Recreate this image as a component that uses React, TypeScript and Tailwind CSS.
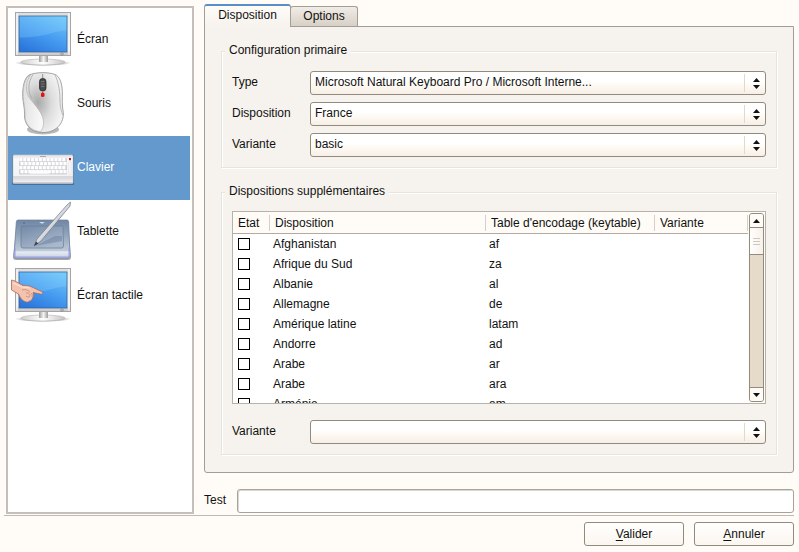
import React from "react";

const comboFace =
  "h-6 w-full appearance-none rounded-[3px] border border-[#928b7d] bg-linear-to-b from-white from-45% via-[#fffcf7] via-50% to-[#f7efe7] pr-8 pb-0.5 pl-1 text-[12px] text-[#111] outline-none";

function Monitor() {
  return (
    <g>
      <ellipse cx="33" cy="55" rx="28" ry="3" fill="url(#shadow)" />
      <ellipse cx="33" cy="54" rx="22" ry="3" fill="url(#metal)" stroke="#b4b4b4" strokeWidth="0.6" />
      <rect x="29" y="48" width="9" height="6" fill="url(#neck)" />
      <rect x="5.5" y="4.5" width="55" height="43" fill="url(#bezel)" stroke="#a5a5a5" />
      <path d="M7 5v42M59 5v42" stroke="#fff" strokeWidth="1" />
      <rect x="9" y="8" width="48" height="36" fill="url(#screen)" stroke="#33639c" strokeWidth="0.8" />
      <path d="M9.500 8.500h47v14c-12 0-21 7-47 7z" fill="#8fd8ff" opacity="0.28" />
      <circle cx="52" cy="46" r="1.300" fill="#ddd" stroke="#777" strokeWidth="0.7" />
    </g>
  );
}

function ScreenIcon() {
  return (
    <svg viewBox="0 0 64 64" className="size-16 shrink-0" aria-hidden="true">
      <defs>
        <linearGradient id="screen" x1="0.8" y1="0" x2="0.2" y2="1">
          <stop offset="0" stopColor="#6cc4f8" />
          <stop offset="0.5" stopColor="#479cf0" />
          <stop offset="1" stopColor="#2a76dc" />
        </linearGradient>
        <linearGradient id="bezel" x1="0" y1="0" x2="0" y2="1">
          <stop offset="0" stopColor="#dedede" />
          <stop offset="0.85" stopColor="#e9e9e9" />
          <stop offset="1" stopColor="#c6c6c6" />
        </linearGradient>
        <linearGradient id="metal" x1="0" y1="0" x2="1" y2="0">
          <stop offset="0" stopColor="#cfcfcf" />
          <stop offset="0.5" stopColor="#ffffff" />
          <stop offset="1" stopColor="#c4c4c4" />
        </linearGradient>
        <linearGradient id="neck" x1="0" y1="0" x2="1" y2="0">
          <stop offset="0" stopColor="#9d9d9d" />
          <stop offset="0.5" stopColor="#f4f4f4" />
          <stop offset="1" stopColor="#9d9d9d" />
        </linearGradient>
        <radialGradient id="shadow">
          <stop offset="0.6" stopColor="#777777" stopOpacity="0.6" />
          <stop offset="1" stopColor="#777777" stopOpacity="0" />
        </radialGradient>
      </defs>
      <Monitor />
    </svg>
  );
}

function MouseIcon() {
  return (
    <svg viewBox="0 0 64 64" className="size-16 shrink-0" aria-hidden="true">
      <defs>
        <radialGradient id="mouse" cx="0.38" cy="0.5" r="0.6">
          <stop offset="0" stopColor="#a9a9a9" />
          <stop offset="0.55" stopColor="#dcdcdc" />
          <stop offset="1" stopColor="#f3f3f3" />
        </radialGradient>
        <linearGradient id="mouseSide" x1="0" y1="0" x2="1" y2="0.3">
          <stop offset="0" stopColor="#dedede" />
          <stop offset="1" stopColor="#f8f8f8" />
        </linearGradient>
      </defs>
      <ellipse cx="33" cy="57.500" rx="16" ry="5" fill="#888" opacity="0.6" />
      <path
        d="M20 2.500c8-2.500 18-2.500 25 0 5 2 7 9 7.300 17 .3 7-.6 13 .7 19 2 9-4 22-20 22-13 0-19-9-18.500-18 .3-7-1.500-11-1.800-18C12.500 16 14 5 20 2.500z"
        fill="url(#mouse)"
        stroke="#8e8e8e"
        strokeWidth="0.8"
      />
      <path
        d="M20.500 3c-5 7-5.500 17-1 23 6 8 14.500 16 14 25 0 4-1 6-3 8.500C20 59 14.500 51 15 42.500c.3-7-1.500-11-1.800-18C13 16 14 6 20.500 3z"
        fill="url(#mouseSide)"
        stroke="#adadad"
        strokeWidth="0.6"
      />
      <path d="M23 2.500c-5 7-5.500 18-1 24" fill="none" stroke="#a4a4a4" strokeWidth="0.8" />
      <path d="M45 3c4 8 5 18 5 26 0 7 2 11 2.500 14" fill="none" stroke="#a8a8a8" strokeWidth="0.8" />
      <path d="M32.700 2v5" stroke="#777" strokeWidth="0.8" />
      <rect x="29.500" y="6.500" width="6.500" height="12.500" rx="3" fill="#4a4a4a" stroke="#222" strokeWidth="0.7" />
      <path d="M31 9.500h3.500M31 12h3.500M31 14.500h3.500" stroke="#888" strokeWidth="0.7" />
      <path d="M32.700 19v2" stroke="#777" strokeWidth="0.8" />
      <rect x="31" y="20.500" width="3.500" height="4.500" rx="1.600" fill="#e6100a" />
    </svg>
  );
}

function KeyboardIcon() {
  const rows = [22, 26, 30, 34];
  return (
    <svg viewBox="0 0 64 64" className="size-16 shrink-0" aria-hidden="true">
      <defs>
        <linearGradient id="kbd" x1="0" y1="0" x2="0" y2="1">
          <stop offset="0" stopColor="#e2e2e6" />
          <stop offset="0.15" stopColor="#f8f8fa" />
          <stop offset="0.72" stopColor="#f4f4f6" />
          <stop offset="0.76" stopColor="#d5d5da" />
          <stop offset="1" stopColor="#f6f6f8" />
        </linearGradient>
      </defs>
      <rect x="2" y="19" width="62.500" height="30" rx="1.500" fill="#37597e" opacity="0.65" />
      <rect x="3" y="19" width="60" height="28.500" rx="1.200" fill="url(#kbd)" stroke="#c7c9d1" strokeWidth="0.6" />
      <path d="M3.500 47h59" stroke="#a9abb5" />
      <rect x="9" y="22" width="48" height="16.500" fill="#d2d2d6" />
      {rows.map((y, r) =>
        Array.from({ length: 12 }, (_, i) => (
          <rect
            key={`${y}-${i}`}
            x={9.3 + (r % 2) * 1.2 + i * 3.9}
            y={y}
            width="3.100"
            height="3.200"
            rx="0.4"
            fill="#fefefe"
          />
        )),
      )}
      <rect x="20" y="34.500" width="19" height="3.200" fill="#fcfcfd" />
      <path d="M30 20.500h6" stroke="#999" strokeWidth="0.8" />
      <rect x="59" y="22" width="2" height="2.200" fill="#c5162a" />
      <rect x="59" y="26" width="2" height="13" rx="0.8" fill="#fff" stroke="#d0d0d5" strokeWidth="0.5" />
    </svg>
  );
}

function TabletIcon() {
  return (
    <svg viewBox="0 0 64 64" className="size-16 shrink-0" aria-hidden="true">
      <defs>
        <linearGradient id="tablet" x1="0" y1="0" x2="0" y2="1">
          <stop offset="0" stopColor="#7086a3" />
          <stop offset="0.35" stopColor="#8ea1b9" />
          <stop offset="0.8" stopColor="#bcc8d6" />
          <stop offset="0.84" stopColor="#e6ebf3" />
          <stop offset="1" stopColor="#c7d0e2" />
        </linearGradient>
        <linearGradient id="pad" x1="0" y1="0" x2="0.6" y2="1">
          <stop offset="0" stopColor="#7389a6" />
          <stop offset="1" stopColor="#a9b9cc" />
        </linearGradient>
        <linearGradient id="pen" x1="0" y1="0" x2="1" y2="1">
          <stop offset="0.3" stopColor="#ffffff" />
          <stop offset="0.8" stopColor="#9aa1ad" />
        </linearGradient>
      </defs>
      <path d="M7 21h51l3 36q0 3-3 3H6q-3 0-3-3z" fill="#777" opacity="0.65" />
      <path d="M8 20h49q1.500 0 1.700 2L60 56q0 2-2 2H6q-2 0-2-2L6.300 22Q6.500 20 8 20z" fill="url(#tablet)" stroke="#6b7f9c" strokeWidth="0.7" />
      <path d="M5 48v8q0 1 1.500 1h51q1.500 0 1.500-1v-8" fill="none" stroke="#8d96f0" strokeWidth="0.9" />
      <path d="M12 26h40q1 0 1 1l.5 19q0 2-2 2H13q-2 0-2-2V28q0-2 1-2z" fill="url(#pad)" stroke="#667c99" strokeWidth="0.7" />
      <path d="M25 46l20-10 7 0v5z" fill="#6b80a0" opacity="0.5" />
      <path d="M29 22h6l-3 1.800z" fill="#d8e0ea" />
      <circle cx="14" cy="23" r="0.7" fill="#3e536f" />
      <path d="M24 46l3-7L57 5l3.500-3-.5 4L31 41z" fill="url(#pen)" stroke="#6f7785" strokeWidth="0.7" />
      <path d="M24 46l2-4.500 2.500 2z" fill="#39424f" />
    </svg>
  );
}

function TouchIcon() {
  return (
    <svg viewBox="0 0 64 64" className="size-16 shrink-0" aria-hidden="true">
      <Monitor />
      <path
        d="M1.500 16L5 17l8 4.500c3-.6 6 .2 9 1.500l9.500 4.500c2 1.200 1.200 2.900-1 2.600l-7.500-1.600c1 2 1 4-.4 5.200-.4 2.200-1.600 3.300-3.100 3.300-1 1.600-3.600 1.400-5.800 0-2.500-1.500-4-4-5.200-7L1.500 26z"
        fill="#f3c3ae"
        stroke="#a5685a"
        strokeWidth="0.8"
      />
      <path d="M12 26c3-1 6 0 8 2M16 29c2-.5 4 .5 4 2.500s-3 2-4 .5M21 29c1.500 1 1.500 3 1 4" fill="none" stroke="#c28a78" strokeWidth="0.8" />
      <path d="M3 19l9 4 8 1" fill="none" stroke="#fde4d8" strokeWidth="1.200" />
    </svg>
  );
}

const devices = [
  { label: "Écran", Icon: ScreenIcon },
  { label: "Souris", Icon: MouseIcon },
  { label: "Clavier", Icon: KeyboardIcon, selected: true },
  { label: "Tablette", Icon: TabletIcon },
  { label: "Écran tactile", Icon: TouchIcon },
];

const layouts = [
  ["Afghanistan", "af"],
  ["Afrique du Sud", "za"],
  ["Albanie", "al"],
  ["Allemagne", "de"],
  ["Amérique latine", "latam"],
  ["Andorre", "ad"],
  ["Arabe", "ar"],
  ["Arabe", "ara"],
  ["Arménie", "am"],
];

function Combo({ id, label, value }: { id: string; label: string; value: string }) {
  return (
    <div className="flex items-center">
      <label htmlFor={id} className="w-[78px] shrink-0 pb-0.5">
        {label}
      </label>
      <div className="relative h-6 min-w-0 flex-1">
        <select id={id} className={comboFace} defaultValue={value}>
          <option value={value}>{value}</option>
        </select>
        <span className="pointer-events-none absolute inset-y-[3px] right-0 flex w-[22px] items-center justify-center border-l border-[#e3d8ca] pt-px pl-0.5">
          <svg width="7" height="11" viewBox="0 0 7 11" aria-hidden="true">
            <path d="M3.500 0L7 4H0zM3.500 11L7 7H0z" fill="#111" />
          </svg>
        </span>
      </div>
    </div>
  );
}

function Group({ title, className, children }: { title: string; className: string; children: React.ReactNode }) {
  return (
    <fieldset
      className={`min-w-0 border border-[#e6e4df] px-2.5 pb-2.5 shadow-[1px_1px_0_#fff,inset_1px_1px_0_#fff] ${className}`}
    >
      <legend className="-ml-[7px] bg-[#f6f3ee] px-1 pb-0.5 leading-[14px]">{title}</legend>
      {children}
    </fieldset>
  );
}

function HeadCell({ children }: { children: string }) {
  return (
    <th scope="col" className="h-[22px] border-b border-[#b5a9a3] p-0 text-left font-normal">
      <div className="flex h-4 items-center border-r border-[#d5cfc9] pl-[5px] whitespace-nowrap">{children}</div>
    </th>
  );
}

export default function App() {
  return (
    <div className="flex h-screen min-h-[552px] flex-col bg-[#fffcf7] px-1 pt-1 pb-1.5 font-['Liberation_Sans',Arial,sans-serif] text-[12px] leading-4 text-[#111]">
      <div className="flex min-h-0 flex-1 gap-2.5 pr-px pb-px">
        <nav className="mt-0.5 ml-0.5 w-[188px] shrink-0 border-2 border-[#c6bebb] bg-white pr-0.5">
          <ul>
            {devices.map(({ label, Icon, selected }) => (
              <li key={label}>
                <button
                  type="button"
                  className={`flex h-16 w-full items-center gap-[3px] pl-0.5 text-left ${selected ? "bg-[#6399cd] text-white" : ""}`}
                >
                  <Icon />
                  <span className="pb-0.5">{label}</span>
                </button>
              </li>
            ))}
          </ul>
        </nav>

        <main className="flex min-w-0 flex-1 flex-col pb-px">
          <div role="tablist" className="flex h-[22px] items-end">
            <button
              type="button"
              role="tab"
              aria-selected="true"
              className="relative z-10 -mb-px h-[23px] w-[87px] rounded-t-[3px] border border-t-2 border-b-0 border-[#a29d96] border-t-[#5590cc] bg-linear-to-b from-[#fffcf7] to-[#f6f3ee] pb-1"
            >
              Disposition
            </button>
            <button
              type="button"
              role="tab"
              aria-selected="false"
              className="-ml-px h-5 w-17 rounded-t-[3px] border border-b-0 border-[#a29d96] bg-linear-to-b from-[#f0ece6] to-[#d8d0c6] pb-0.5"
            >
              Options
            </button>
          </div>

          <section className="flex min-h-0 flex-1 flex-col rounded-b-[3px] border border-[#a29d96] bg-[#f6f3ee] px-4 pt-4 pb-[17px]">
            <Group title="Configuration primaire" className="pt-3">
              <div className="flex flex-col gap-[7px]">
                <Combo id="type" label="Type" value="Microsoft Natural Keyboard Pro / Microsoft Interne..." />
                <Combo id="layout" label="Disposition" value="France" />
                <Combo id="variant" label="Variante" value="basic" />
              </div>
            </Group>

            <Group title="Dispositions supplémentaires" className="mt-4 flex min-h-0 flex-1 flex-col pt-[11px]">
              <div className="flex min-h-0 flex-1 flex-col gap-4">
                <div className="flex min-h-0 flex-1 border border-[#b7b1ab] bg-[#fffcf7]">
                  <div className="h-0 min-h-full min-w-0 flex-1 overflow-hidden bg-white">
                    <table className="w-full table-fixed border-separate border-spacing-0">
                      <colgroup>
                        <col className="w-[37px]" />
                        <col className="w-[216px]" />
                        <col className="w-[169px]" />
                        <col />
                      </colgroup>
                      <thead className="bg-[#fffcf7]">
                        <tr>
                          <HeadCell>Etat</HeadCell>
                          <HeadCell>Disposition</HeadCell>
                          <HeadCell>Table d'encodage (keytable)</HeadCell>
                          <HeadCell>Variante</HeadCell>
                        </tr>
                      </thead>
                      <tbody>
                        {layouts.map(([name, code], i) => (
                          <tr key={i}>
                            <td className="h-5 p-0 pl-[5px]">
                              <input
                                type="checkbox"
                                aria-label={`${name} (${code})`}
                                className="block size-3 appearance-none border border-black bg-white"
                              />
                            </td>
                            <td className="p-0 pl-[3px]">{name}</td>
                            <td className="p-0 pl-[3px]">{code}</td>
                            <td className="p-0" />
                          </tr>
                        ))}
                      </tbody>
                    </table>
                  </div>
                  <div className="m-px flex w-[15px] flex-col rounded-[3px] border border-[#938c7e] bg-[#e6dacb]">
                    <button
                      type="button"
                      aria-label="Défiler vers le haut"
                      className="flex h-3.5 items-center justify-center rounded-t-[2px] border-b border-[#938c7e] bg-[#fffcf7]"
                    >
                      <svg width="7" height="4" viewBox="0 0 7 4" aria-hidden="true">
                        <path d="M3.500 0L7 4H0z" fill="#111" />
                      </svg>
                    </button>
                    <div className="flex h-[27px] flex-col items-center justify-center gap-0.5 border-b border-[#938c7e] bg-linear-to-r from-white to-[#f6f1ea]">
                      <span className="h-px w-[7px] bg-[#d0c8bc]" />
                      <span className="h-px w-[7px] bg-[#d0c8bc]" />
                      <span className="h-px w-[7px] bg-[#d0c8bc]" />
                    </div>
                    <div className="flex-1" />
                    <button
                      type="button"
                      aria-label="Défiler vers le bas"
                      className="flex h-3.5 items-center justify-center rounded-b-[2px] border-t border-[#938c7e] bg-[#fffcf7]"
                    >
                      <svg width="7" height="4" viewBox="0 0 7 4" aria-hidden="true">
                        <path d="M3.500 4L7 0H0z" fill="#111" />
                      </svg>
                    </button>
                  </div>
                </div>
                <Combo id="extra-variant" label="Variante" value="" />
              </div>
            </Group>
          </section>

          <div className="mt-4 flex items-center gap-[11px]">
            <label htmlFor="test" className="pb-0.5">
              Test
            </label>
            <input
              id="test"
              type="text"
              className="h-6 min-w-0 flex-1 rounded-[3px] border border-[#aaa299] bg-white px-1 shadow-[inset_1px_1px_0_#dcd8d4] outline-none"
            />
          </div>
        </main>
      </div>

      <footer className="mr-px flex justify-end gap-2.5 border-t border-[#bdb9b6] pt-1.5">
        <button
          type="button"
          className="h-6 w-[100px] rounded-[3px] border border-[#928b7d] bg-linear-to-b from-white to-[#fbf6ef]"
        >
          <span className="underline underline-offset-2">V</span>alider
        </button>
        <button
          type="button"
          className="h-6 w-[100px] rounded-[3px] border border-[#928b7d] bg-linear-to-b from-white to-[#fbf6ef]"
        >
          <span className="underline underline-offset-2">A</span>nnuler
        </button>
      </footer>
    </div>
  );
}
